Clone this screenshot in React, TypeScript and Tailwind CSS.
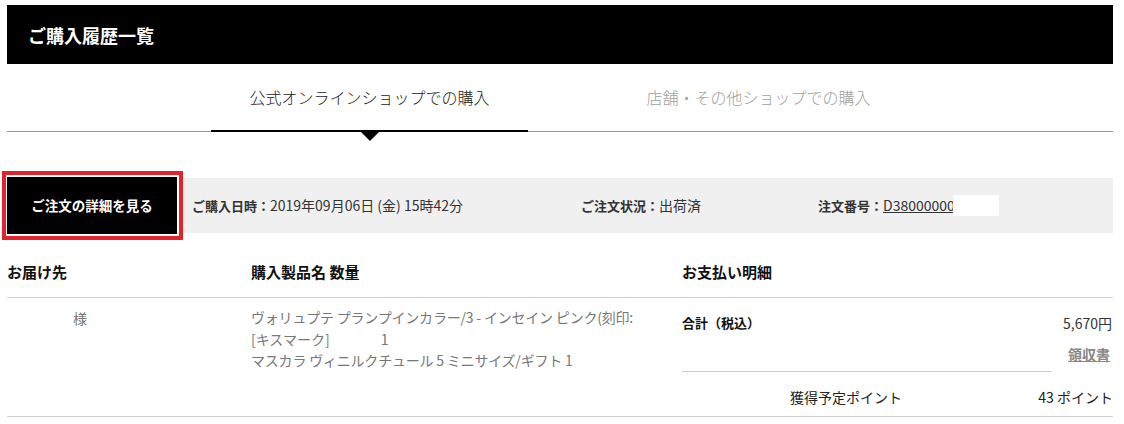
import React from "react";

const font = { fontFamily: '"Noto Sans CJK JP", "Noto Sans", sans-serif' };

export default function App() {
  return (
    <div className="w-[1124px] h-[424px] bg-white overflow-hidden text-[#333]" style={font}>
      <div className="ml-[7px] w-[1106px]">
        {/* Header */}
        <div className="mt-[5px] h-[59px] bg-black flex items-center pl-[21px]">
          <h1 className="text-white font-bold text-[18px] leading-none">ご購入履歴一覧</h1>
        </div>

        {/* Tabs */}
        <div className="relative mt-[22px] border-b border-[#9a9a9a]">
          <div className="flex pl-[204px]">
            <div className="relative w-[317px] h-[45px] flex items-start justify-center">
              <span className="text-[16px] leading-[22px] text-[#222] font-light">公式オンラインショップでの購入</span>
              <div className="absolute left-0 right-0 -bottom-[1px] h-[2px] bg-black" />
              <div className="absolute left-1/2 -translate-x-1/2 top-[46px] w-0 h-0 border-l-[9px] border-r-[9px] border-t-[9px] border-l-transparent border-r-transparent border-t-black" />
            </div>
            <div className="ml-[72px] w-[317px] h-[45px] flex items-start justify-center">
              <span className="text-[16px] leading-[22px] text-[#a0a0a0] font-light">店舗・その他ショップでの購入</span>
            </div>
          </div>
        </div>

        {/* Info bar */}
        <div className="mt-[46px] h-[55px] bg-[#f0f0f0] flex items-center text-[13px]">
          <div className="relative w-[170px] h-[57px] shrink-0">
            <div className="absolute -left-[5px] -top-[6px] w-[181px] h-[69px] border-[4px] border-[#e4222b] bg-white" />
            <div className="absolute left-0 top-0 w-[170px] h-[57px] bg-black flex items-center justify-center">
              <span className="text-white font-bold text-[13.5px]">ご注文の詳細を見る</span>
            </div>
          </div>
          <div className="ml-[15px] w-[389px] shrink-0 flex items-center">
            <span className="font-bold">ご購入日時：</span>
            <span className="text-[14px]">2019年09月06日 (金) 15時42分</span>
          </div>
          <div className="w-[237px] shrink-0 flex items-center">
            <span className="font-bold">ご注文状況：</span>
            <span className="text-[14px]">出荷済</span>
          </div>
          <div className="flex items-center">
            <span className="font-bold">注文番号：</span>
            <span className="underline text-[14px]">D38000000</span>
            <span className="-ml-[2px] w-[46px] h-[21px] bg-white inline-block" />
          </div>
        </div>

        {/* Section headers */}
        <div className="flex pt-[28px] pb-[14px] border-b border-[#cfcfcf] text-[15px] font-bold leading-[22px] text-[#111]">
          <div className="w-[244px]">お届け先</div>
          <div className="w-[431px]">購入製品名 数量</div>
          <div className="flex-1">お支払い明細</div>
        </div>

        {/* Row */}
        <div className="flex border-b border-[#cfcfcf] h-[119px]">
          <div className="w-[244px] pt-[9px] pl-[66px] text-[14px] leading-[22px] text-[#777]">様</div>
          <div className="w-[431px] pt-[9px] text-[14px] leading-[21.5px] text-[#777]">
            <div className="tracking-[-0.2px]">ヴォリュプテ プランプインカラー/3 - インセイン ピンク(刻印:</div>
            <div>
              [キスマーク]<span className="inline-block w-[51px]" />1
            </div>
            <div className="tracking-[-0.2px]">マスカラ ヴィニルクチュール 5 ミニサイズ/ギフト 1</div>
          </div>
          <div className="flex-1 flex flex-col">
            <div className="flex justify-between items-center pt-[15px] pr-[1px]">
              <span className="font-bold text-[13px] leading-[20px] text-[#111]">合計（税込）</span>
              <span className="text-[14px] leading-[20px]">5,670円</span>
            </div>
            <div className="flex justify-end pr-[3px] mt-[11px]">
              <span className="font-bold text-[14px] leading-[20px] text-[#888] underline">領収書</span>
            </div>
            <div className="mt-[7px] w-[370px] h-px bg-[#cfcfcf]" />
            <div className="flex items-center mt-[15px] text-[14px] leading-[20px] text-[#222]">
              <span className="ml-[108px]">獲得予定ポイント</span>
              <span className="ml-auto">43 ポイント</span>
            </div>
          </div>
        </div>
      </div>
    </div>
  );
}
